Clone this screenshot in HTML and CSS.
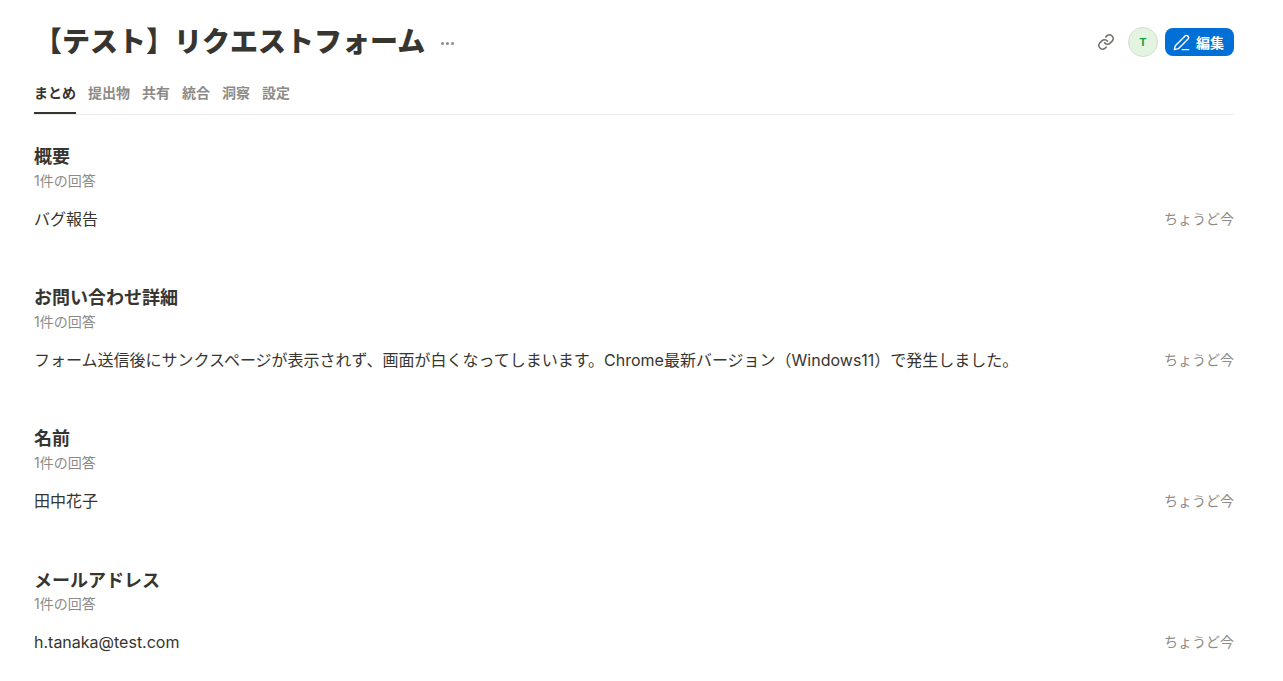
FILE: index.html
```html
<!DOCTYPE html>
<html lang="ja">
<head>
  <meta charset="UTF-8" />
  <title>【テスト】リクエストフォーム</title>
  <link rel="stylesheet" href="styles.css">
</head>
<body>
  <div class="page">
    <header class="top">
      <div class="title-wrap">
        <h1>【テスト】リクエストフォーム</h1>
        <span class="more"><i></i><i></i><i></i></span>
      </div>
      <div class="actions">
        <svg class="link-icon" width="18" height="18" viewBox="0 0 24 24" fill="none" stroke="#6f6e69" stroke-width="2" stroke-linecap="round" stroke-linejoin="round">
          <path d="M10 13a5 5 0 0 0 7.5.5l3-3a5 5 0 0 0-7-7l-1.7 1.7"/>
          <path d="M14 11a5 5 0 0 0-7.5-.5l-3 3a5 5 0 0 0 7 7l1.7-1.7"/>
        </svg>
        <span class="avatar">T</span>
        <button class="edit">
          <svg width="19" height="19" viewBox="0 0 24 24" fill="none" stroke="#fff" stroke-width="1.8" stroke-linecap="round" stroke-linejoin="round">
            <path d="M3 21l1.2-5L16.5 3.7a2.3 2.3 0 0 1 3.3 0l.5.5a2.3 2.3 0 0 1 0 3.3L8 19.8z"/>
            <path d="M13 21h8"/>
          </svg>
          編集
        </button>
      </div>
    </header>

    <nav class="tabs">
      <a class="active">まとめ</a>
      <a>提出物</a>
      <a>共有</a>
      <a>統合</a>
      <a>洞察</a>
      <a>設定</a>
    </nav>

    <section class="block">
      <h2>概要</h2>
      <p class="count">1件の回答</p>
      <div class="row"><span>バグ報告</span><time>ちょうど今</time></div>
    </section>

    <section class="block">
      <h2>お問い合わせ詳細</h2>
      <p class="count">1件の回答</p>
      <div class="row"><span>フォーム送信後にサンクスページが表示されず、画面が白くなってしまいます。Chrome最新バージョン（Windows11）で発生しました。</span><time>ちょうど今</time></div>
    </section>

    <section class="block">
      <h2>名前</h2>
      <p class="count">1件の回答</p>
      <div class="row"><span>田中花子</span><time>ちょうど今</time></div>
    </section>

    <section class="block">
      <h2>メールアドレス</h2>
      <p class="count">1件の回答</p>
      <div class="row"><span>h.tanaka@test.com</span><time>ちょうど今</time></div>
    </section>
  </div>
</body>
</html>
```

FILE: styles.css
```css
* { margin:0; padding:0; box-sizing:border-box }
html, body { height:100%; background:#fff; overflow:hidden }
body {
  font-family:Inter,"Noto Sans CJK JP",sans-serif;
  color:#37352f;
}
.page { padding:24px 49px 0 34px }

.top { display:flex; align-items:center; justify-content:space-between; height:36px }
.title-wrap { display:flex; align-items:center; gap:16px }
h1 { font-size:28px; font-weight:900; line-height:36px; color:#37352f }
.more { display:flex; gap:2px; margin-top:2px }
.more i { width:3px; height:3px; border-radius:50%; background:#8c8b87 }

.actions { display:flex; align-items:center; gap:7px }
.link-icon { margin-right:6px }
.avatar {
  width:30px; height:30px; border-radius:50%;
  display:flex; align-items:center; justify-content:center;
  background:#e3f5e1; border:1px solid #d5dcd3;
  color:#1f9d3a; font-size:11px; font-weight:700;
}
.edit {
  display:flex; align-items:center; gap:5px;
  height:28px; padding:0 10px 0 7px;
  background:#006fd6; color:#fff;
  border:none; border-radius:8px;
  font:700 14px Inter,"Noto Sans CJK JP",sans-serif;
}

.tabs { display:flex; gap:12px; margin-top:15px; border-bottom:1px solid #ebebea; height:40px }
.tabs a {
  font-size:14px; font-weight:700; color:#8c8b87;
  line-height:20px; padding-top:8px; height:39px;
}
.tabs a.active { color:#37352f; border-bottom:2px solid #37352f }

.block { height:141.2px; padding-top:30px }
h2 { font-size:18px; font-weight:700; line-height:24px }
.count { font-size:14px; line-height:20px; color:#8c8b87; margin-top:1.6px }
.row { display:flex; justify-content:space-between; margin-top:16px; font-size:16px; line-height:24px; }
.row time { font-size:14px; color:#8c8b87 }
```
